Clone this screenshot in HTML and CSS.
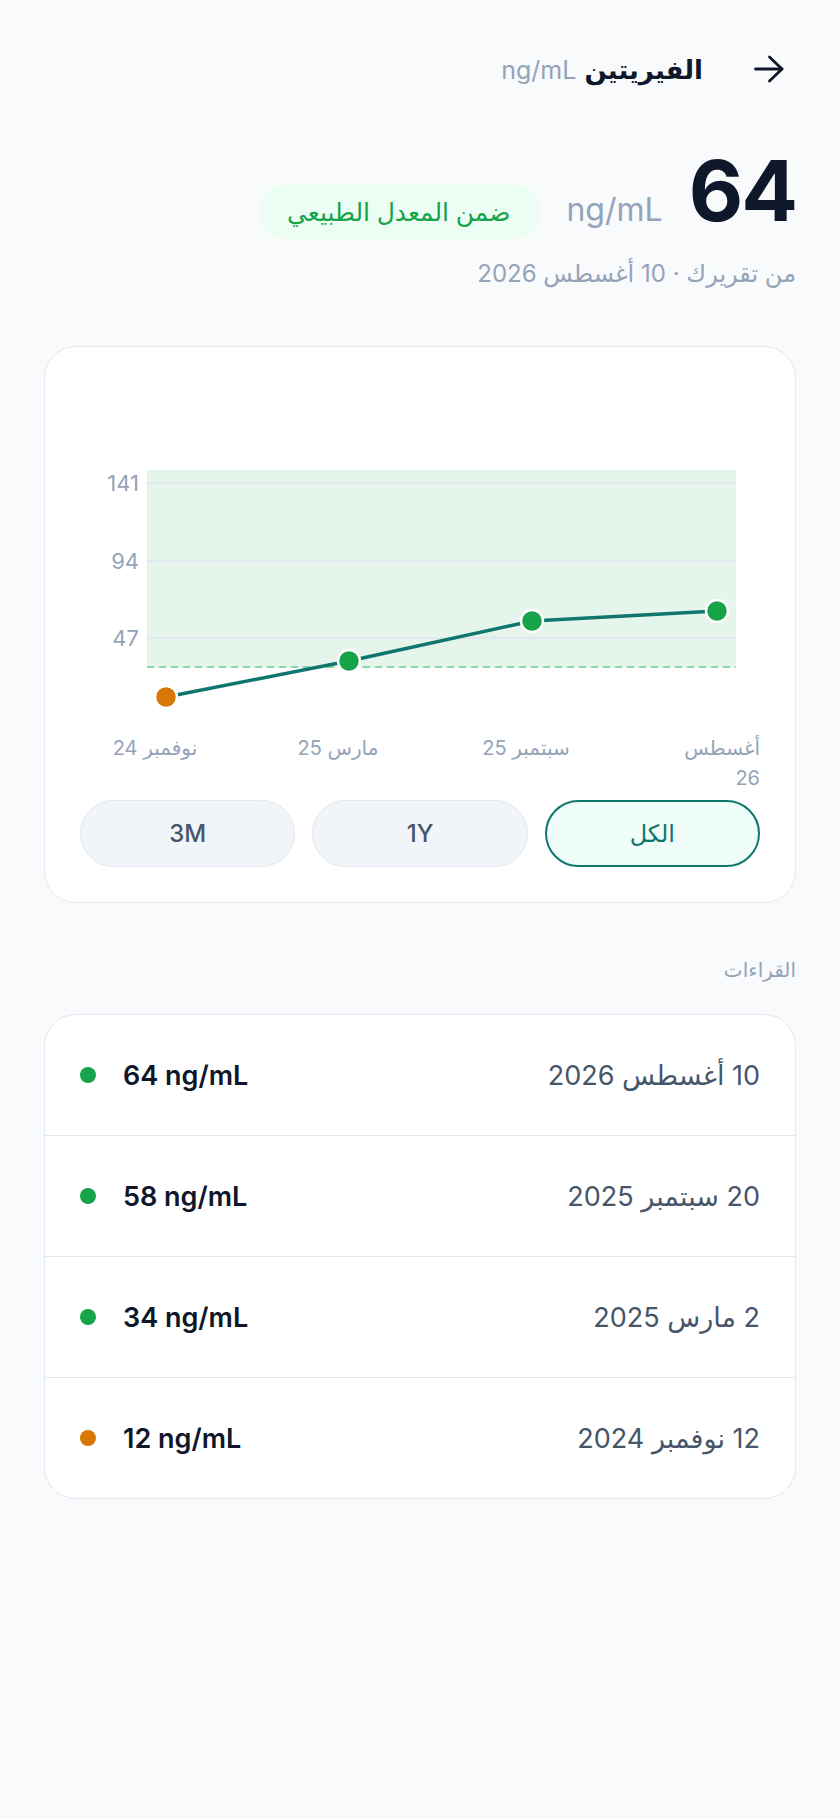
FILE: index.html
```html
<!DOCTYPE html>
<html lang="ar" dir="rtl">
<head>
    <meta charset="UTF-8">
    <title>الفيريتين</title>
    <link rel="stylesheet" href="styles.css">
</head>
<body>
<div class="page">
    <header class="topbar">
        <button class="back" aria-label="رجوع">
            <svg width="32" height="32" viewBox="0 0 32 32" fill="none" stroke="#0f172a" stroke-width="2.8" stroke-linecap="round" stroke-linejoin="round">
                <path d="M2.5 16h26.5"/>
                <path d="M16.5 4L29 16 16.5 28"/>
            </svg>
        </button>
        <h1 class="title">الفيريتين <span class="title-unit">ng/mL</span></h1>
    </header>

    <div class="value-row">
        <span class="value">64</span>
        <span class="value-unit">ng/mL</span>
        <span class="badge">ضمن المعدل الطبيعي</span>
    </div>
    <p class="source">من تقريرك · 10 أغسطس 2026</p>

    <section class="card chart-card">
        <div class="chart">
            <svg width="680" height="443" viewBox="0 0 680 443">
                <rect x="67" y="123" width="589" height="198" fill="#e6f5eb"/>
                <g stroke="#e2e8f0" stroke-width="2">
                    <line x1="67" y1="136" x2="656" y2="136"/>
                    <line x1="67" y1="214" x2="656" y2="214"/>
                    <line x1="67" y1="291" x2="656" y2="291"/>
                </g>
                <line x1="67" y1="320" x2="656" y2="320" stroke="#86d9a4" stroke-width="2" stroke-dasharray="7 5"/>
                <g class="axis" text-anchor="end">
                    <text x="59" y="144">141</text>
                    <text x="59" y="222">94</text>
                    <text x="59" y="299">47</text>
                </g>
                <polyline points="86,350 269,314 452,274 637,264" fill="none" stroke="#0f766e" stroke-width="3.5" stroke-linejoin="round"/>
                <g stroke="#fff" stroke-width="2.5">
                    <circle cx="86" cy="350" r="11" fill="#d97706"/>
                    <circle cx="269" cy="314" r="11" fill="#16a34a"/>
                    <circle cx="452" cy="274" r="11" fill="#16a34a"/>
                    <circle cx="637" cy="264" r="11" fill="#16a34a"/>
                </g>
                <g class="axis axis-x" text-anchor="middle">
                    <text x="75" y="408">نوفمبر 24</text>
                    <text x="258" y="408">مارس 25</text>
                    <text x="446" y="408">سبتمبر 25</text>
                </g>
                <g class="axis axis-x" text-anchor="end">
                    <text x="680" y="408">أغسطس</text>
                    <text x="680" y="438">26</text>
                </g>
            </svg>
        </div>
        <div class="ranges">
            <button class="range active">الكل</button>
            <button class="range">1Y</button>
            <button class="range">3M</button>
        </div>
    </section>

    <h2 class="section-label">القراءات</h2>

    <section class="card readings">
        <div class="reading">
            <span class="date">10 أغسطس 2026</span>
            <span class="reading-value"><span dir="ltr">64 ng/mL</span><i class="dot ok"></i></span>
        </div>
        <div class="reading">
            <span class="date">20 سبتمبر 2025</span>
            <span class="reading-value"><span dir="ltr">58 ng/mL</span><i class="dot ok"></i></span>
        </div>
        <div class="reading">
            <span class="date">2 مارس 2025</span>
            <span class="reading-value"><span dir="ltr">34 ng/mL</span><i class="dot ok"></i></span>
        </div>
        <div class="reading">
            <span class="date">12 نوفمبر 2024</span>
            <span class="reading-value"><span dir="ltr">12 ng/mL</span><i class="dot low"></i></span>
        </div>
    </section>
</div>
</body>
</html>
```

FILE: styles.css
```css
body { margin: 0; background: #f8fafc; color: #0f172a; font-family: Inter, "DejaVu Sans", sans-serif; }
.page { padding: 45px 44px 80px; direction: rtl; }

.topbar { display: flex; align-items: center; gap: 50px; height: 48px; }
.back { width: 32px; height: 32px; margin-right: 11px; padding: 0; border: none; background: none; cursor: pointer; }
.back svg { display: block; }
.title { margin: 0; font-size: 26px; font-weight: 700; }
.title-unit { margin-right: 2px; font-size: 25px; font-weight: 400; color: #94a3b8; }

.value-row { display: flex; align-items: baseline; gap: 26px; margin-top: 56px; }
.value { font-size: 84px; font-weight: 700; line-height: 1; letter-spacing: -2px; }
.value-unit { font-size: 32px; color: #94a3b8; }
.badge { padding: 10px 30px 10px 28px; border-radius: 999px; background: #ecfdf3; color: #16a34a; font-size: 25px; line-height: 36px; font-weight: 500; }
.source { margin: 17px 0 0; font-size: 24px; line-height: 33px; color: #94a3b8; }

.card { background: #fff; border: 1.5px solid #e2e8f0; border-radius: 32px; }
.chart-card { margin-top: 56px; padding: 0 35px 35px; }
.chart svg { display: block; direction: ltr; }
.axis { font-family: Inter, "DejaVu Sans", sans-serif; font-size: 22px; fill: #94a3b8; }
.axis-x { font-size: 20px; }

.ranges { display: grid; grid-template-columns: repeat(3, 1fr); gap: 17px; margin-top: 10px; }
.range { height: 67px; border: 1.5px solid #e2e8f0; border-radius: 999px; background: #f1f5f9; color: #475569; font-family: inherit; font-size: 24px; font-weight: 500; cursor: pointer; }
.range.active { border: 2px solid #0f766e; background: #effdf8; color: #0f766e; }

.section-label { margin: 54px 0 0; font-size: 20px; line-height: 26px; font-weight: 500; color: #94a3b8; }

.readings { margin-top: 31px; overflow: hidden; }
.reading { display: flex; align-items: center; justify-content: space-between; height: 120px; padding: 0 35px; }
.reading + .reading { border-top: 1.5px solid #e2e8f0; }
.date { font-size: 27px; color: #475569; }
.reading-value { display: flex; align-items: center; gap: 27px; font-size: 27px; font-weight: 600; }
.dot { width: 16px; height: 16px; border-radius: 50%; }
.dot.ok { background: #16a34a; }
.dot.low { background: #d97706; }
```
